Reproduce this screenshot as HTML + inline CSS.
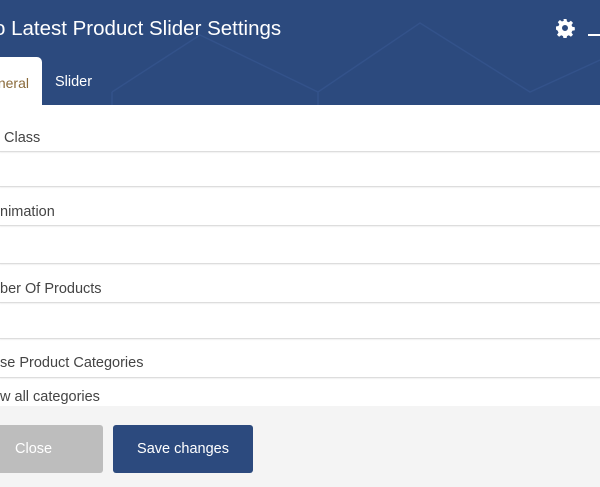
<html><head><style>
body{margin:0;width:600px;height:487px;overflow:hidden;background:#fff;font-family:"Liberation Sans",sans-serif;position:relative}
.hd{position:absolute;left:0;top:0;width:600px;height:105px;background:#2c4a7e;overflow:hidden}
.t{position:absolute;color:#fff;font-size:20.5px;left:-6px;top:17px;letter-spacing:0px}
.tab{position:absolute;left:-20px;top:57px;width:62px;height:48px;background:#fff;border-radius:0 5px 0 0}
.tab span{position:absolute;right:13px;top:18px;font-size:14px;color:#8a6a3a}
.sl{position:absolute;left:55px;top:74px;font-size:14.5px;color:#fff}
.l{position:absolute;font-size:14.5px;color:#444;left:0}
.ln{position:absolute;left:0;width:600px;height:1px;background:#ddd;box-shadow:0 1px 1px #eee}
.ft{position:absolute;left:0;top:406px;width:600px;height:81px;background:#f4f4f4}
.b{position:absolute;top:425px;height:48px;border-radius:3px;color:#fff;font-size:14.5px;line-height:48px;text-align:center}
</style></head><body>
<div class="hd">
<svg width="600" height="105" style="position:absolute;left:0;top:0" fill="none" stroke="#33528a" stroke-width="1.5"><path d="M112 92 L200 35 L318 92 L420 23 L530 92 L600 60 M112 92 V105 M318 92 V105"/></svg>
<div class="t">o Latest Product Slider Settings</div>
<svg style="position:absolute;left:555px;top:18px" width="20" height="20" viewBox="0 0 20 20"><path fill="#fff" d="M8.5 1h3l.5 2.5 1.8.8 2.1-1.5 2.1 2.1-1.5 2.1.8 1.8 2.5.5v3l-2.5.5-.8 1.8 1.5 2.1-2.1 2.1-2.1-1.5-1.8.8-.5 2.5h-3l-.5-2.5-1.8-.8-2.1 1.5-2.1-2.1 1.5-2.1-.8-1.8L1 11.5v-3l2.5-.5.8-1.8-1.5-2.1 2.1-2.1 2.1 1.5 1.8-.8zM10 7a3 3 0 100 6 3 3 0 000-6z"/></svg>
<div style="position:absolute;left:588px;top:34px;width:14px;height:2px;background:#fff"></div>
<div class="tab"><span>neral</span></div>
<div class="sl">Slider</div>
</div>
<div class="l" style="top:130px">&nbsp;Class</div>
<div class="ln" style="top:151px"></div>
<div class="ln" style="top:186px"></div>
<div class="l" style="top:204px">nimation</div>
<div class="ln" style="top:225px"></div>
<div class="ln" style="top:263px"></div>
<div class="l" style="top:281px">ber Of Products</div>
<div class="ln" style="top:302px"></div>
<div class="ln" style="top:338px"></div>
<div class="l" style="top:355px">se Product Categories</div>
<div class="ln" style="top:377px"></div>
<div class="l" style="top:389px">w all categories</div>
<div class="ft"></div>
<div class="b" style="left:-30px;width:133px;background:#bdbdbd"><span style="position:absolute;left:45px">Close</span></div>
<div class="b" style="left:113px;width:140px;background:#2c4a7e">Save changes</div>
</body></html>
